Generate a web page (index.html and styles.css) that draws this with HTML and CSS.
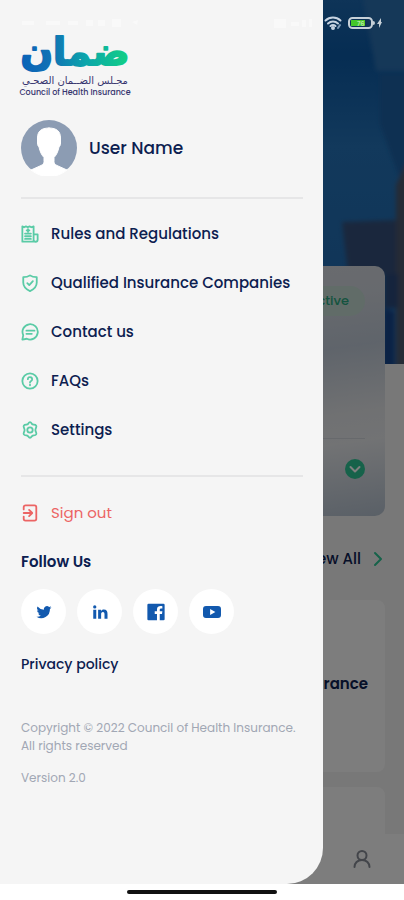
FILE: index.html
```html
<!DOCTYPE html>
<html lang="en">
<head>
<meta charset="utf-8">
<meta name="viewport" content="width=device-width, initial-scale=1">
<title>Council of Health Insurance</title>
<link rel="stylesheet" href="styles.css">
</head>
<body>
<div class="screen">
  <main class="app">
    <div class="content">
      <svg class="hero" viewBox="0 0 404 364" preserveAspectRatio="xMaxYMin slice" aria-hidden="true">
        <defs>
          <linearGradient id="sky" x1="0" y1="0" x2="0" y2="1"><stop offset="0" stop-color="#1c68b0"/><stop offset=".15" stop-color="#0c5aa6"/><stop offset=".4" stop-color="#2472b8"/><stop offset="1" stop-color="#2068ae"/></linearGradient>
          <filter id="soft"><feGaussianBlur stdDeviation="2"/></filter>
        </defs>
        <rect width="404" height="364" fill="url(#sky)"/>
        <g filter="url(#soft)">
          <path d="M362 -5h50v76h-36z" fill="#2a70b0"/>
          <path d="M380 74h30v120l-12-20-18-50z" fill="#1c60a4"/>
          <path d="M342 222l54-2v54h-48z" fill="#34507a"/>
          <path d="M396 185l14-30v225h-14z" fill="#4c566c"/>
          <path d="M384 274h14v34h-14z" fill="#2c4a7a"/>
          <path d="M384 308l10 4v60h-12z" fill="#14448a"/>
        </g>
      </svg>
      <section class="policy">
        <div class="policy-top"><span class="badge">Active</span></div>
        <div class="policy-foot">
          <button class="expand" aria-label="Expand"><svg viewBox="0 0 20 20"><path d="M5.500 8l4.500 4.500L14.500 8"/></svg></button>
        </div>
      </section>
      <a class="view-all" href="#">View All <svg viewBox="0 0 12 16"><path d="M2 2l6 6-6 6"/></svg></a>
      <section class="tile">Insurance</section>
      <section class="tile"></section>
    </div>
    <nav class="tabs">
      <a href="#" aria-label="Profile"><svg viewBox="0 0 20 20"><circle cx="10" cy="6.500" r="4.500"/><path d="M2.500 18c0-4 3-7 7.500-7s7.500 3 7.500 7"/></svg></a>
    </nav>
  </main>
  <div class="scrim"></div>
  <aside class="drawer">
    <svg class="logo" viewBox="0 0 112 60" role="img" aria-label="Council of Health Insurance">
      <defs><linearGradient id="brand" gradientUnits="userSpaceOnUse" x1="0" y1="0" x2="110" y2="0"><stop offset="0" stop-color="#0a62b8"/><stop offset=".3" stop-color="#1173b4"/><stop offset=".6" stop-color="#0ba6ab"/><stop offset="1" stop-color="#12d183"/></linearGradient></defs>
      <text class="mark" x="55" y="25">ضمان</text>
      <text class="mark-ar" x="55" y="44">مجـلس الضــمان الصحـي</text>
      <text class="mark-en" x="55" y="55">Council of Health Insurance</text>
    </svg>
    <div class="user">
      <svg class="avatar" viewBox="0 0 56 56" aria-hidden="true">
        <circle cx="28" cy="28" r="28" fill="#8c9cb3"/>
        <path d="M28 8c-8 0-11.500 3.500-11.500 10v5c0 2 .5 3 1.500 4 1 5 3 8.500 5 10.500v4c0 2-1 3-3 4L10 50a28.500 28.500 0 0 0 36 0l-10-4.500c-2-1-3-2-3-4v-4c2-2 4-5.500 5-10.500 1-1 1.500-2 1.500-4v-5c0-6.500-3.500-10-11.500-10z" fill="#fff" stroke="#fff"/>
      </svg>
      <span>User Name</span>
    </div>
    <nav class="menu">
      <a href="#"><svg viewBox="0 0 20 20"><path d="M1.500 18.500V1.500l2 1 2-1 2 1 2-1 2 1 2.500-1v17zM14 10.500h4.500v6a2 2 0 0 1-4.500 0M14 18.500h2.500"/><path d="M4.500 9.500h6.500M4.500 12.500h6.500M4.500 15.500h6.500M7.800 4.500v3M6.300 6h3"/></svg>Rules and Regulations</a>
      <a href="#"><svg viewBox="0 0 20 20"><path d="M10 1.500c2 1.500 4.500 2 7.500 2v6c0 4.500-3 7.500-7.500 9.500-4.500-2-7.500-5-7.500-9.500v-6c3 0 5.500-.5 7.500-2z"/><path d="M7 10.200l2.200 2.200 4-4.400"/></svg>Qualified Insurance Companies</a>
      <a href="#"><svg viewBox="0 0 20 20"><path d="M1.500 18.500l1-5A8.500 8.500 0 1 1 6.500 17.500z"/><path d="M6 8.500h9M6 12h6"/></svg>Contact us</a>
      <a href="#"><svg viewBox="0 0 20 20"><circle cx="10" cy="10" r="8.500"/><path d="M7.600 8a2.400 2.400 0 1 1 3.600 2.100c-.8.500-1.200.8-1.200 1.700M10 14v.8"/></svg>FAQs</a>
      <a href="#"><svg viewBox="0 0 20 20"><path d="M10 1.300c1.700 0 1.800 2 3 2.500s2.900-.4 3.900 1.300c.9 1.500-.9 2.700-.9 4.900s1.800 3.400.9 4.900c-1 1.700-2.700.8-3.900 1.300s-1.300 2.500-3 2.500-1.800-2-3-2.500-2.900.4-3.900-1.300c-.9-1.500.9-2.700.9-4.900s-1.800-3.400-.9-4.900c1-1.700 2.700-.8 3.900-1.300s1.300-2.500 3-2.500z"/><circle cx="10" cy="10" r="3"/></svg>Settings</a>
    </nav>
    <a class="signout" href="#"><svg viewBox="0 0 20 20"><path d="M3 6V3.500a2 2 0 0 1 2-2h10a2 2 0 0 1 2 2v13a2 2 0 0 1-2 2H5a2 2 0 0 1-2-2V14"/><path d="M3 10h9M9 6.500l3.500 3.500L9 13.500"/></svg>Sign out</a>
    <h2>Follow Us</h2>
    <div class="social">
      <a href="#" aria-label="Twitter"><svg viewBox="0 0 24 24"><path d="M22 6c-.7.3-1.500.5-2.400.7.900-.5 1.500-1.300 1.800-2.300-.8.500-1.700.8-2.600 1a4.100 4.100 0 0 0-7 3.700A11.600 11.600 0 0 1 3.400 4.800a4.100 4.100 0 0 0 1.300 5.500c-.7 0-1.300-.2-1.900-.5 0 2 1.400 3.600 3.300 4-.6.200-1.200.2-1.900.1.500 1.600 2 2.800 3.800 2.800A8.200 8.200 0 0 1 2 18.400 11.600 11.600 0 0 0 19.900 8.100C20.700 7.500 21.400 6.800 22 6z"/></svg></a>
      <a href="#" aria-label="LinkedIn"><svg viewBox="0 0 24 24"><path d="M3 9h4v12H3zM5 3a2.200 2.200 0 1 1 0 4.400A2.200 2.200 0 0 1 5 3zM9.500 9h3.800v1.700c.7-1.200 2-2 3.800-2 3.800 0 4.900 2.400 4.900 5.800V21h-4v-6c0-1.600-.3-3-2.100-3s-2.400 1.300-2.400 3v6h-4z"/></svg></a>
      <a href="#" aria-label="Facebook"><svg viewBox="0 0 24 24"><path d="M2 1h20a1.500 1.500 0 0 1 1.500 1.500v19A1.500 1.500 0 0 1 22 23h-5v-8.500h3l.5-3.500H17V9c0-1 .5-1.800 2-1.800h1.500V4.200C17 3.500 13.300 4 13.300 8.500V11h-3v3.500h3V23H2a1.500 1.500 0 0 1-1.500-1.500v-19A1.500 1.500 0 0 1 2 1z"/></svg></a>
      <a href="#" aria-label="YouTube"><svg viewBox="0 0 24 24"><path fill-rule="evenodd" d="M4 4h16q4 0 4 4v8q0 4-4 4H4q-4 0-4-4V8q0-4 4-4zm5.500 4v8l7-4z"/></svg></a>
    </div>
    <a class="privacy" href="#">Privacy policy</a>
    <p class="legal">Copyright © 2022 Council of Health Insurance. All rights reserved</p>
    <p class="legal">Version 2.0</p>
  </aside>
  <div class="status" aria-hidden="true">
    <svg class="ghost" viewBox="0 0 140 16"><path d="M2 6h12v4H2zM26 6h14v4H26zM48 6h10v4H48zM66 5h7v6h-7zM78 5h7v6h-7zM92 4h9v8h-9zM112 7l6-2-1 5z"/></svg>
    <svg class="ghost signal" viewBox="0 0 54 16"><path d="M7 4h12v9H7zM24 7h8v4h-8zM35 5h4v7h-4zM42 4h3v8h-3z"/></svg>
    <svg class="wifi" viewBox="0 0 18 16"><path d="M1.500 5.500a11 11 0 0 1 15 0M4 8.500a7.500 7.500 0 0 1 10 0M6.500 11a4 4 0 0 1 5 0"/><circle cx="9" cy="13" r="1"/><path class="link" d="M14 13l2-3"/></svg>
    <svg class="battery" viewBox="0 0 36 16"><rect x="1" y="3" width="23" height="10" rx="3.500"/><path class="charge" d="M3 5h14v6H3z"/><path class="cap" d="M25 6q2 0 2 2t-2 2zM33 3l-4 6h2v4l3-6h-1z"/><text x="9" y="11">76</text></svg>
  </div>
</div>
<div class="gesture"><span></span></div>
</body>
</html>
```
FILE: styles.css
```css
* { box-sizing: border-box; }

body {
  margin: 0;
  height: 100vh;
  display: flex;
  flex-direction: column;
  background: #fff;
  color: #0c2050;
  font-family: Poppins, Inter, "Open Sans", sans-serif;
  font-size: 15px;
  font-weight: 500;
  line-height: 24px;
}

a { color: inherit; text-decoration: none; }
svg { display: block; flex: none; fill: none; stroke-linecap: round; stroke-linejoin: round; }

/* The app, scrim, drawer and status bar share one grid cell. */
.screen {
  flex: 1;
  min-height: 0;
  display: grid;
  grid-template: minmax(0, 1fr) / minmax(0, 1fr);
}
.screen > * { grid-area: 1 / 1; }

.app { display: flex; flex-direction: column; background: #f0f0f0; }
.content { flex: 1; min-height: 0; overflow: hidden; }
.hero { width: 100%; height: 364px; }

.policy {
  position: relative;
  height: 250px;
  margin: -98px 19px 0;
  padding: 20px;
  display: flex;
  flex-direction: column;
  justify-content: space-between;
  border-radius: 10px;
  background: linear-gradient(172deg, #d6d8dd 0%, #cfd4dc 25%, #bfc9d6 42%, #e0e2e5 64%, #e4e6e9 74%, #b4c0ce 100%);
}
.policy-top { display: flex; justify-content: flex-end; }
.badge {
  padding: 3px 16px;
  border-radius: 15px;
  background: #c2d8d0;
  color: #2aa77e;
  font-size: 13px;
}
.policy-foot {
  display: flex;
  justify-content: flex-end;
  padding: 20px 0 17px;
  border-top: 1px solid #ced2d8;
}
.expand {
  width: 20px;
  height: 20px;
  padding: 0;
  border: 0;
  border-radius: 50%;
  background: #2cc594;
}
.expand path { stroke: #fff; stroke-width: 2; }

.view-all {
  display: flex;
  align-items: center;
  justify-content: flex-end;
  gap: 12px;
  margin: 31px 19px 29px;
}
.view-all svg { width: 12px; height: 16px; stroke: #2cc594; stroke-width: 2; }

.tile {
  height: 172px;
  margin: 0 19px 15px;
  padding: 0 17px 4px;
  display: flex;
  align-items: center;
  justify-content: flex-end;
  border-radius: 8px;
  background: #fafafa;
  font-weight: 600;
}
.tabs {
  height: 50px;
  padding: 0 32px;
  display: flex;
  align-items: center;
  justify-content: flex-end;
  background: #fafafa;
}
.tabs svg { width: 20px; height: 20px; stroke: #868b95; stroke-width: 2; }

.scrim { background: rgba(0, 0, 0, 0.5); z-index: 1; }

.drawer {
  z-index: 2;
  width: 80%;
  padding: 40px 20px 0 21px;
  border-bottom-right-radius: 36px;
  background: #f5f5f5;
}
.logo { width: 112px; height: 60px; margin-left: -1px; overflow: visible; }
.logo text { text-anchor: middle; }
.mark {
  font: bold 38px "DejaVu Sans", sans-serif;
  fill: url(#brand);
  stroke: url(#brand);
  stroke-width: 2px;
}
.mark-ar { font: 10px "DejaVu Sans", sans-serif; fill: #35346e; }
.mark-en { font: 500 8px Poppins, "Open Sans", sans-serif; fill: #35346e; }

.user {
  display: flex;
  align-items: center;
  gap: 12px;
  margin-top: 20px;
  padding-bottom: 21px;
  border-bottom: 2px solid #e6e6e7;
  font-size: 17px;
}
.avatar { width: 56px; height: 56px; }

.menu {
  display: flex;
  flex-direction: column;
  gap: 25px;
  padding: 23px 0 33px;
  border-bottom: 2px solid #e6e6e7;
}
.menu a, .signout { display: flex; align-items: center; gap: 12px; }
.menu svg, .signout svg { width: 18px; height: 20px; stroke: #5acba6; stroke-width: 2; }
.signout { margin-top: 24px; color: #ec6464; font-weight: 400; }
.signout svg { stroke: #ec6464; }

h2 { margin: 25px 0 15px; font-size: 15px; font-weight: 600; line-height: 24px; }
.social { display: flex; gap: 11px; }
.social a {
  width: 45px;
  height: 45px;
  display: grid;
  place-items: center;
  border-radius: 50%;
  background: #fff;
}
.social svg { width: 18px; height: 18px; fill: #1259ae; }
.privacy { display: block; margin: 18px 0 43px; font-size: 14px; }
.legal { margin: 0 0 14px; color: #a1a7b4; font-size: 12px; font-weight: 400; line-height: 18px; }

.status {
  z-index: 3;
  align-self: start;
  display: flex;
  align-items: center;
  height: 46px;
  padding: 0 20px;
}
.ghost { width: 140px; height: 16px; fill: #f9f9f9; }
.signal { width: 54px; margin-left: auto; }
.wifi { width: 18px; height: 16px; margin: 0 6px 0 3px; stroke: #c6d3e2; stroke-width: 2; }
.wifi .link { stroke: #7f9bb8; }
.battery { width: 36px; height: 16px; }
.battery rect { stroke: #c6d0d8; stroke-width: 2; }
.battery .charge { fill: #45c72a; }
.battery .cap { fill: #c6d0d8; }
.battery text { font: bold 6px Inter, sans-serif; fill: #b4e8a4; }

.gesture { height: 16px; display: flex; justify-content: center; align-items: center; }
.gesture span { width: 37%; height: 4px; border-radius: 2px; background: #111; }
```
